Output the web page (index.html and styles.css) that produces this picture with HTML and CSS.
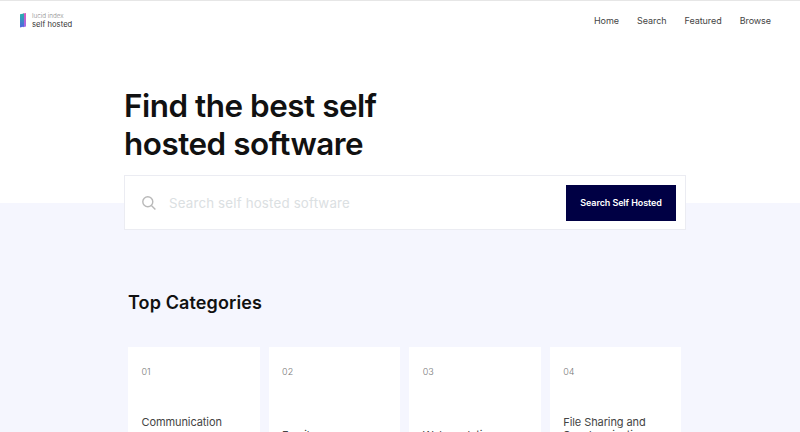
FILE: index.html
```html
<!DOCTYPE html>
<html lang="en">
<head>
<meta charset="utf-8">
<title>Lucid Index – Self Hosted</title>
<link rel="stylesheet" href="styles.css">
</head>
<body>
<header class="header">
  <a class="brand">
    <svg class="brand-mark" width="6" height="15" viewBox="0 0 6 15">
      <defs>
        <linearGradient id="teal" x1="0" y1="0" x2="0" y2="1"><stop offset="0" stop-color="#25b5ac"/><stop offset="1" stop-color="#5263de"/></linearGradient>
        <linearGradient id="pink" x1="0" y1="0" x2="0" y2="1"><stop offset="0" stop-color="#d65bbd"/><stop offset="1" stop-color="#a06ce8"/></linearGradient>
      </defs>
      <path d="M3 0.4 6 0V13.4L3 14.3Z" fill="url(#pink)"/>
      <path d="M0 1.3 4 0.4V13.6L0 14.5Z" fill="url(#teal)"/>
    </svg>
    <span class="brand-text"><span class="brand-top">lucid index</span><span class="brand-name">self hosted</span></span>
  </a>
  <nav class="nav"><a>Home</a><a>Search</a><a>Featured</a><a>Browse</a></nav>
</header>
<main>
  <section class="hero">
    <h1 class="title">Find the best self<br>hosted software</h1>
    <form class="search">
      <svg class="search-icon" width="14" height="14" viewBox="0 0 14 14" fill="none" stroke="#b9b9b9" stroke-width="1.4"><circle cx="5.8" cy="5.8" r="5"/><path d="M9.4 9.4 13.4 13.4"/></svg>
      <span class="placeholder">Search self hosted software</span>
      <button class="search-button" type="button">Search Self Hosted</button>
    </form>
  </section>
  <section class="categories">
    <h2 class="subtitle">Top Categories</h2>
    <div class="cards">
      <article class="card"><span class="num">01</span><h3 class="name">Communication</h3></article>
      <article class="card low"><span class="num">02</span><h3 class="name">Email</h3></article>
      <article class="card low"><span class="num">03</span><h3 class="name">Web analytics</h3></article>
      <article class="card"><span class="num">04</span><h3 class="name">File Sharing and Synchronization</h3></article>
    </div>
  </section>
</main>
</body>
</html>
```
FILE: styles.css
```css
* { box-sizing: border-box; }
body { margin: 0; height: 432px; overflow: hidden; font-family: Inter, sans-serif; color: #111; border-top: 1px solid #e6e6e6;
  background: linear-gradient(#fff 203px, #f5f6fe 203px); }
.header { height: 39px; padding: 0 29px 0 20px; display: flex; justify-content: space-between; align-items: center; }
.brand { display: flex; align-items: center; gap: 6px; }
.brand-text { display: flex; flex-direction: column; }
.brand-top { font-size: 6.3px; line-height: 8px; color: #888; font-weight: 300; }
.brand-name { font-size: 7.6px; line-height: 9px; color: #333; letter-spacing: 0.05px; }
.nav { display: flex; gap: 18px; font-size: 9px; line-height: 12px; color: #444; letter-spacing: -0.06px; }
.hero { width: 562px; margin: 47px 0 0 124px; }
.title { margin: 0; font-size: 31.4px; line-height: 38px; font-weight: 600; letter-spacing: -0.46px; }
.search { margin-top: 12px; height: 55px; background: #fff; border: 1px solid #ebecf2; display: flex; align-items: center; padding: 0 9px 0 17px; }
.placeholder { margin-left: 13px; font-size: 13.3px; color: #dbe0e2; flex: 1; letter-spacing: 0.18px; }
.search-button { width: 110px; height: 36px; padding: 0; border: 0; background: #000044; color: #fff; font: 600 9px Inter, sans-serif; letter-spacing: -0.1px; }
.categories { width: 554px; margin: 61px 0 0 128px; }
.subtitle { margin: 0; font-size: 18px; line-height: 24px; font-weight: 600; letter-spacing: 0.12px; }
.cards { height: 85px; overflow: hidden; margin-top: 32px; display: grid; grid-template-columns: repeat(4, 131.6px); gap: 9px; }
.card { height: 85px; background: #fff; padding: 19px 13.5px 0; overflow: hidden; }
.num { display: block; font-size: 9px; line-height: 12px; color: #777; font-weight: 300; }
.name { margin: 38px 0 0; font-size: 11px; line-height: 13px; font-weight: 400; color: #444; letter-spacing: -0.09px; }
.low .name { margin-top: 51px; }
```
